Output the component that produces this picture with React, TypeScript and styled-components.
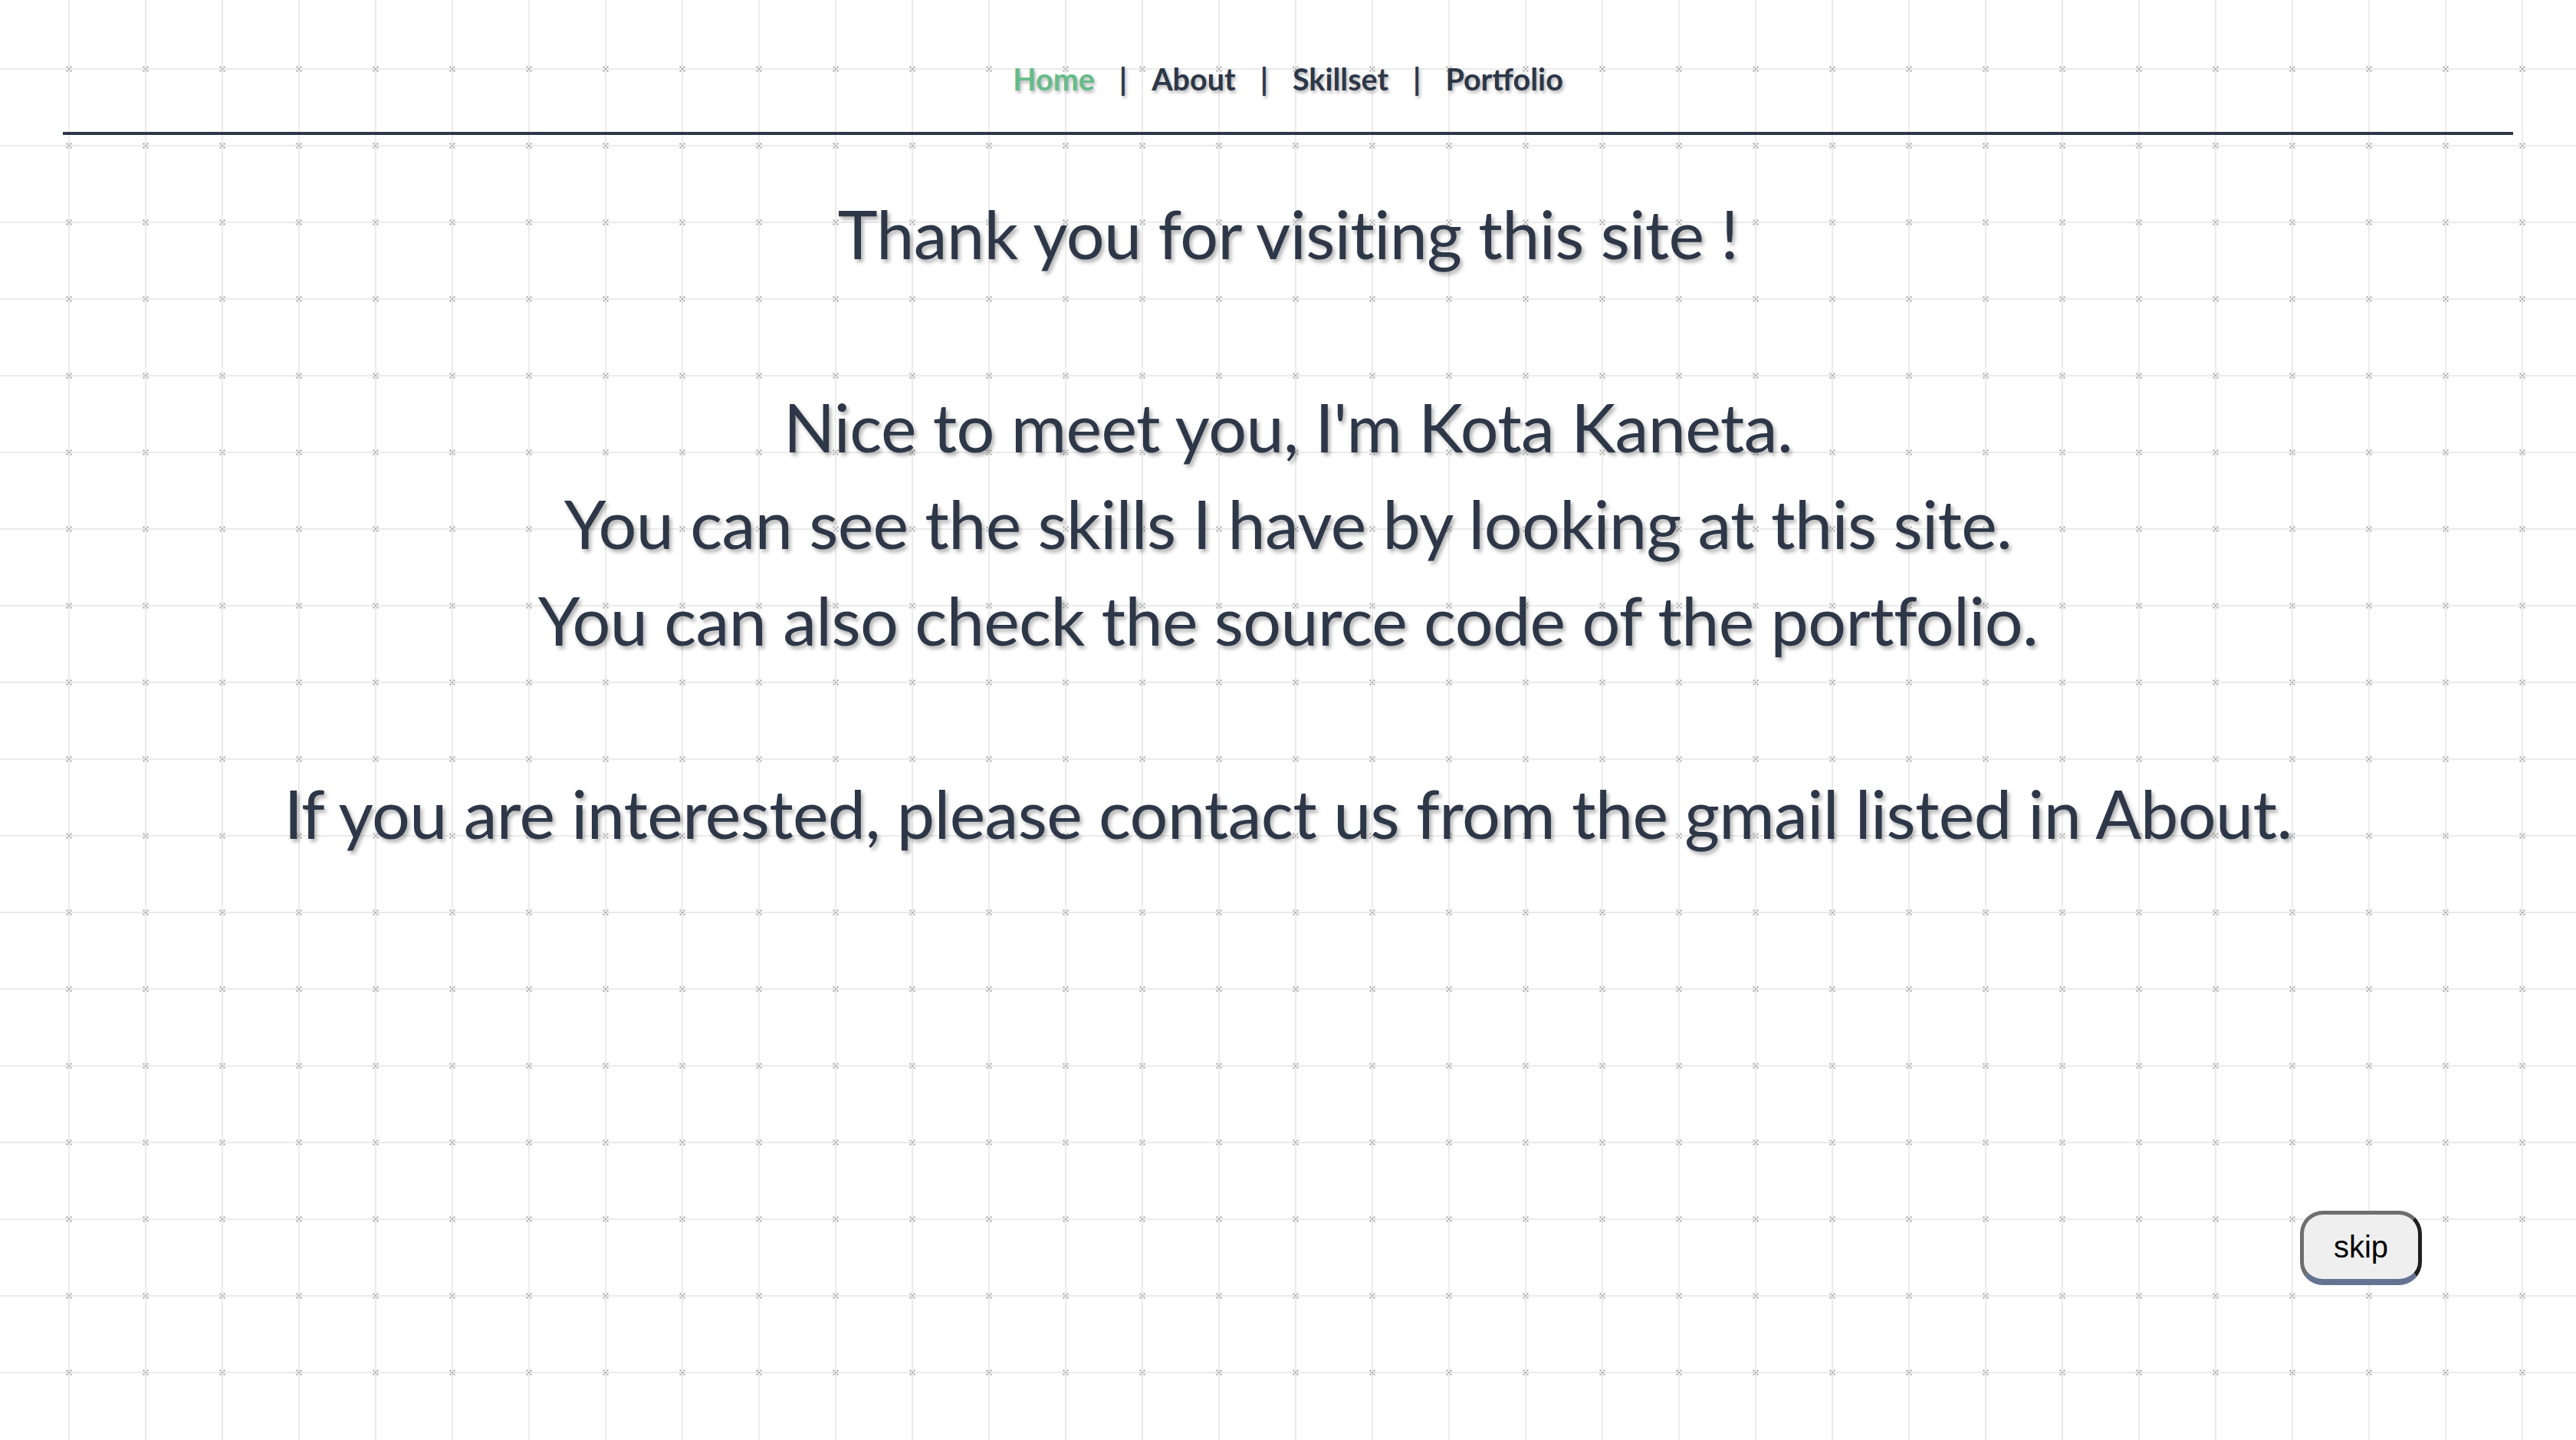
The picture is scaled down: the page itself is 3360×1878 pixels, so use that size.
import React from "react";
import styled, { createGlobalStyle } from "styled-components";

const GlobalStyle = createGlobalStyle`
  html, body {
    margin: 0;
    padding: 0;
  }
  body {
    min-height: 1878px;
    background-color: #ffffff;
    background-image:
      radial-gradient(circle at 50% 50%, #a0a0a0 0 1px, transparent 1.5px),
      radial-gradient(circle at 50% 50%, #a0a0a0 0 1px, transparent 1.5px),
      radial-gradient(circle at 50% 50%, #a0a0a0 0 1px, transparent 1.5px),
      radial-gradient(circle at 50% 50%, #a0a0a0 0 1px, transparent 1.5px),
      radial-gradient(circle at 50% 50%, #a0a0a0 0 1px, transparent 1.5px),
      linear-gradient(to right, #ebebeb 0 2px, transparent 2px),
      linear-gradient(to bottom, #ebebeb 0 2px, transparent 2px);
    background-size: 100px 100px;
    background-position:
      37.5px 37.5px,
      42.5px 37.5px,
      37.5px 42.5px,
      42.5px 42.5px,
      40px 40px,
      89px 0,
      0 89px;
    background-repeat: repeat;
  }
`;

const Page = styled.div`
  min-height: 1878px;
  display: flex;
  flex-direction: column;
  font-family: "Lato", "Noto Sans", sans-serif;
  color: #2d3748;
`;

const Header = styled.header`
  margin: 0 82px;
  padding-top: 78px;
  height: 94px;
  border-bottom: 4px solid #2d3748;
  display: flex;
  justify-content: center;
  align-items: flex-start;
`;

const Nav = styled.nav`
  display: flex;
  align-items: center;
  gap: 32px;
  font-size: 39.5px;
  font-weight: 700;
  line-height: 50px;
  text-shadow: 2px 3px 4px rgba(0, 0, 0, 0.3);
`;

const NavLink = styled.a<{ $active?: boolean }>`
  color: ${(p) => (p.$active ? "#66bb8a" : "#2d3748")};
  text-decoration: none;
  cursor: pointer;
`;

const Sep = styled.span`
  color: #2d3748;
`;

const Message = styled.main`
  margin-top: 65px;
  text-align: center;
  font-size: 88px;
  letter-spacing: -0.6px;
  line-height: 126px;
  font-weight: 400;
  text-shadow: 3px 4px 5px rgba(0, 0, 0, 0.3);
`;

const Line = styled.p`
  margin: 0;
  min-height: 126px;
`;

const SkipButton = styled.button`
  position: fixed;
  right: 201px;
  bottom: 202px;
  width: 159px;
  height: 97px;
  box-sizing: border-box;
  background: #efefef;
  border-style: solid;
  border-width: 5px 5px 8px 5px;
  border-color: #6e6e6e #1f1f1f #637391 #6e6e6e;
  border-radius: 30px;
  font-family: "Liberation Sans", Arial, sans-serif;
  font-size: 40px;
  color: #000;
  cursor: pointer;
  padding: 0;
`;

const links = ["Home", "About", "Skillset", "Portfolio"];

export default function App() {
  return (
    <>
      <GlobalStyle />
      <Page>
        <Header>
          <Nav>
            {links.map((l, i) => (
              <React.Fragment key={l}>
                {i > 0 && <Sep>|</Sep>}
                <NavLink $active={i === 0}>{l}</NavLink>
              </React.Fragment>
            ))}
          </Nav>
        </Header>
        <Message>
          <Line>Thank you for visiting this site !</Line>
          <Line />
          <Line>Nice to meet you, I'm Kota Kaneta.</Line>
          <Line>You can see the skills I have by looking at this site.</Line>
          <Line>You can also check the source code of the portfolio.</Line>
          <Line />
          <Line>If you are interested, please contact us from the gmail listed in About.</Line>
        </Message>
        <SkipButton>skip</SkipButton>
      </Page>
    </>
  );
}
